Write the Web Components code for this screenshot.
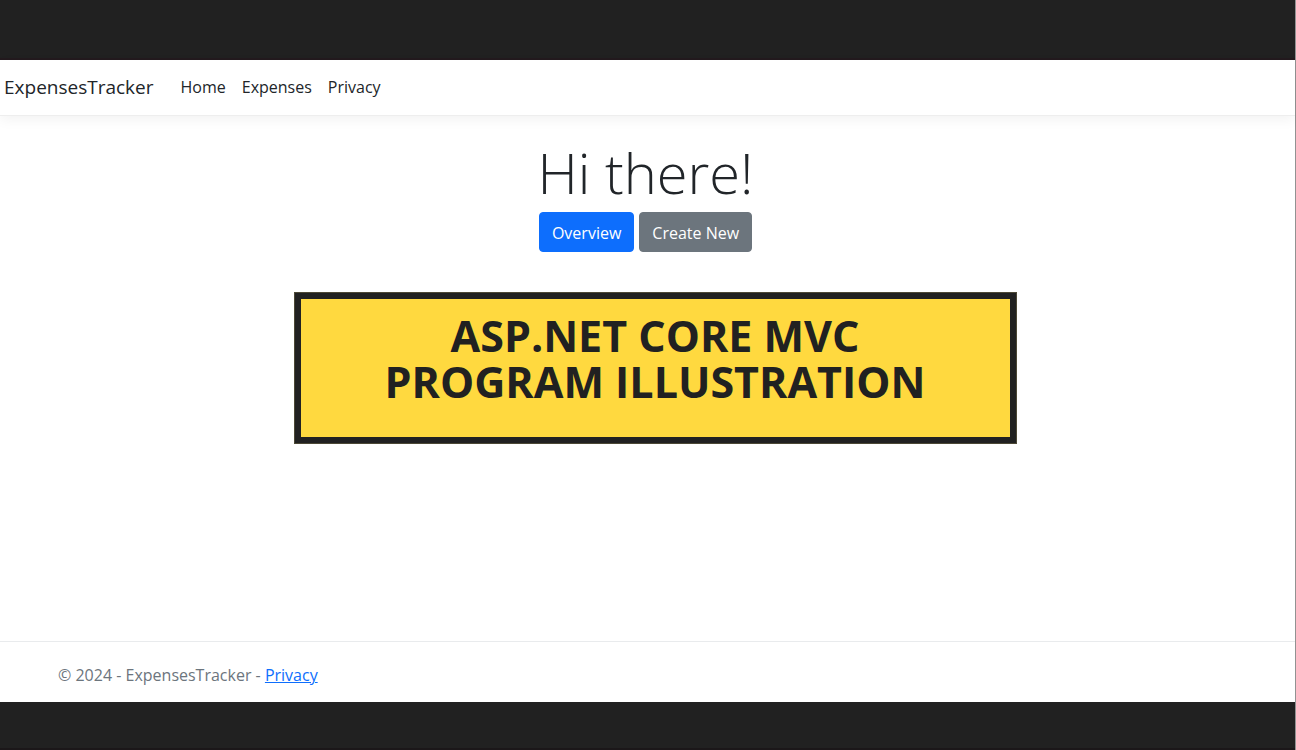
<!DOCTYPE html>
<html lang="en">
<head>
<meta charset="utf-8">
<meta name="viewport" content="width=device-width, initial-scale=1">
<title>Home Page - ExpensesTracker</title>
<style>
  html, body { margin: 0; min-height: 100%; }
  body {
    --dark: #212121;
    --ink: #212529;
    font: 16px/24px "Open Sans", "Noto Sans", sans-serif;
    color: var(--ink);
    background: #fff;
  }
</style>
</head>
<body>
<expenses-frame>
  <site-header slot="header">
    <nav-link href="#home">Home</nav-link>
    <nav-link href="#expenses">Expenses</nav-link>
    <nav-link href="#privacy">Privacy</nav-link>
  </site-header>
  <welcome-panel>
    <action-button>Overview</action-button>
    <action-button variant="secondary">Create New</action-button>
  </welcome-panel>
  <title-banner>ASP.NET CORE MVC<br>PROGRAM ILLUSTRATION</title-banner>
  <site-footer slot="footer"></site-footer>
</expenses-frame>

<script>
function define(name, html) {
  customElements.define(name, class extends HTMLElement {
    constructor() {
      super();
      const t = document.createElement('template');
      t.innerHTML = html;
      this.attachShadow({ mode: 'open' }).append(t.content.cloneNode(true));
    }
    connectedCallback() {
      const a = this.shadowRoot.querySelector('a[data-link]');
      if (a) a.href = this.getAttribute('href');
    }
  });
}

define('expenses-frame', `
  <style>
    :host {
      display: flex; flex-direction: column; box-sizing: border-box;
      min-height: 100vh; border-right: 1px solid #929292;
    }
    .band { background: var(--dark); box-sizing: border-box; }
    .top { height: 60px; border-bottom: 2px solid #231a1e; }
    .bottom { height: 48px; border-bottom: 2px solid #1b1719; }
    main { flex: 1; padding: 24px 4px 24px 0; }
  </style>
  <div class="band top"></div>
  <slot name="header"></slot>
  <main><slot></slot></main>
  <slot name="footer"></slot>
  <div class="band bottom"></div>`);

define('site-header', `
  <style>
    :host {
      display: block; border-bottom: 1px solid #eee;
      box-shadow: 0 4px 12px rgba(0, 0, 0, .05);
    }
    nav { display: flex; align-items: center; height: 54px; padding: 0 4px 1px; }
    .brand { font-size: 19px; line-height: 30px; color: var(--ink); text-decoration: none; margin-right: 27px; }
    .links { display: flex; gap: 16px; }
  </style>
  <nav>
    <a class="brand" href="#home">ExpensesTracker</a>
    <div class="links"><slot></slot></div>
  </nav>`);

define('nav-link', `
  <style>
    :host { display: block; }
    a { color: var(--ink); text-decoration: none; }
  </style>
  <a data-link href="#"><slot></slot></a>`);

define('welcome-panel', `
  <style>
    :host { display: block; text-align: center; }
    h1 { margin: 0 0 8px; font-size: 56px; line-height: 64px; font-weight: 300; }
    .actions { display: flex; justify-content: center; gap: 5px; }
  </style>
  <h1>Hi there!</h1>
  <div class="actions"><slot></slot></div>`);

define('action-button', `
  <style>
    :host { display: block; --fill: #0d6efd; }
    :host([variant="secondary"]) { --fill: #6c757d; }
    button {
      display: block; font: inherit; color: #fff; background: var(--fill);
      border: 1px solid var(--fill); border-radius: 4px; padding: 8px 12px 6px;
      height: 40px; cursor: pointer;
    }
  </style>
  <button type="button"><slot></slot></button>`);

define('title-banner', `
  <style>
    :host { display: flex; justify-content: center; margin-top: 40px; padding-left: 19px; }
    h2 {
      box-sizing: border-box; width: 100%; max-width: 723px; min-height: 152px; margin: 0;
      padding: 14px 16px; border: 7px solid var(--dark); background: #ffd93f;
      outline: 1px solid #4c4836; outline-offset: -1px;
      color: var(--dark); text-align: center;
      font-size: 43px; line-height: 46px; font-weight: 700;
    }
  </style>
  <h2><slot></slot></h2>`);

define('site-footer', `
  <style>
    :host { display: block; border-top: 1px solid #e9ebed; color: #6c757d; }
    footer { padding: 21px 58px 15px; }
    a { color: #0d6efd; }
  </style>
  <footer>© 2024 - ExpensesTracker - <a href="#privacy">Privacy</a></footer>`);
</script>
</body>
</html>
